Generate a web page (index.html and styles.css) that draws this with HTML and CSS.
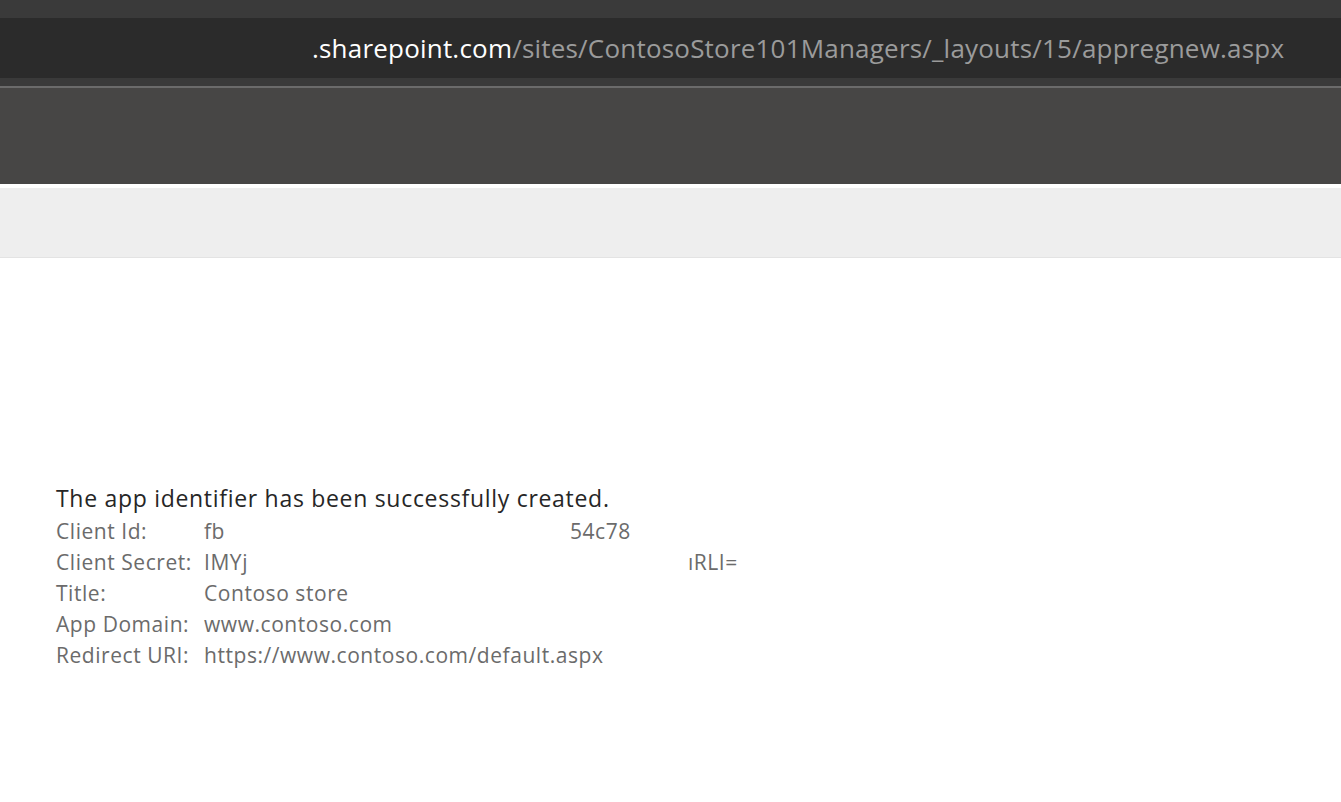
FILE: index.html
```html
<!DOCTYPE html>
<html>
<head>
<meta charset="utf-8">
<link rel="stylesheet" href="styles.css">
</head>
<body>
<div class="topband"></div>
<div class="addressbar">
  <span class="url"><span class="host">.sharepoint.com</span><span class="path">/sites/ContosoStore101Managers/_layouts/15/appregnew.aspx</span></span>
</div>
<div class="underbar"></div>
<div class="suitebar"></div>
<div class="gap"></div>
<div class="ribbon"></div>
<main class="content">
  <p class="message">The app identifier has been successfully created.</p>
  <div class="details">
    <div class="label">Client Id:</div>
    <div class="value"><span class="part id-part">fb</span><span class="tail">54c78</span></div>
    <div class="label">Client Secret:</div>
    <div class="value"><span class="part secret-part">IMYj</span><span class="tail">ıRLI=</span></div>
    <div class="label">Title:</div>
    <div class="value">Contoso store</div>
    <div class="label">App Domain:</div>
    <div class="value">www.contoso.com</div>
    <div class="label">Redirect URI:</div>
    <div class="value">https://www.contoso.com/default.aspx</div>
  </div>
</main>
</body>
</html>
```
FILE: styles.css
```css
* { box-sizing: border-box; }
html, body { margin: 0; padding: 0; background: #ffffff; }
body { font-family: "Open Sans", "Noto Sans", sans-serif; }

.topband { height: 18px; background: #3a3a3a; }
.addressbar {
  height: 60px;
  background: #2b2b2b;
  display: flex;
  align-items: center;
  padding-left: 312px;
}
.url { font-size: 26px; white-space: nowrap; letter-spacing: 0.2px; }
.host { color: #ffffff; }
.path { color: #9b9b9b; }
.underbar { height: 10px; background: #3a3a3a; border-bottom: 2px solid #6b6b6b; }
.suitebar { height: 96px; background: #474645; }
.gap { height: 4px; background: #ffffff; }
.ribbon { height: 70px; background: #eeeeee; border-bottom: 1px solid #e3e3e3; }

.content { padding: 225px 0 0 56px; }
.message {
  margin: 0 0 2px 0;
  font-size: 23px;
  line-height: 31px;
  color: #262626;
  letter-spacing: 0.7px;
}
.details {
  display: grid;
  grid-template-columns: 148px auto;
  grid-auto-rows: 31px;
  font-size: 21px;
  line-height: 31px;
  color: #6b6b6b;
  letter-spacing: 0.55px;
}
.value { display: flex; white-space: nowrap; }
.part { display: inline-block; }
.id-part { width: 366px; }
.secret-part { width: 484px; }
```
